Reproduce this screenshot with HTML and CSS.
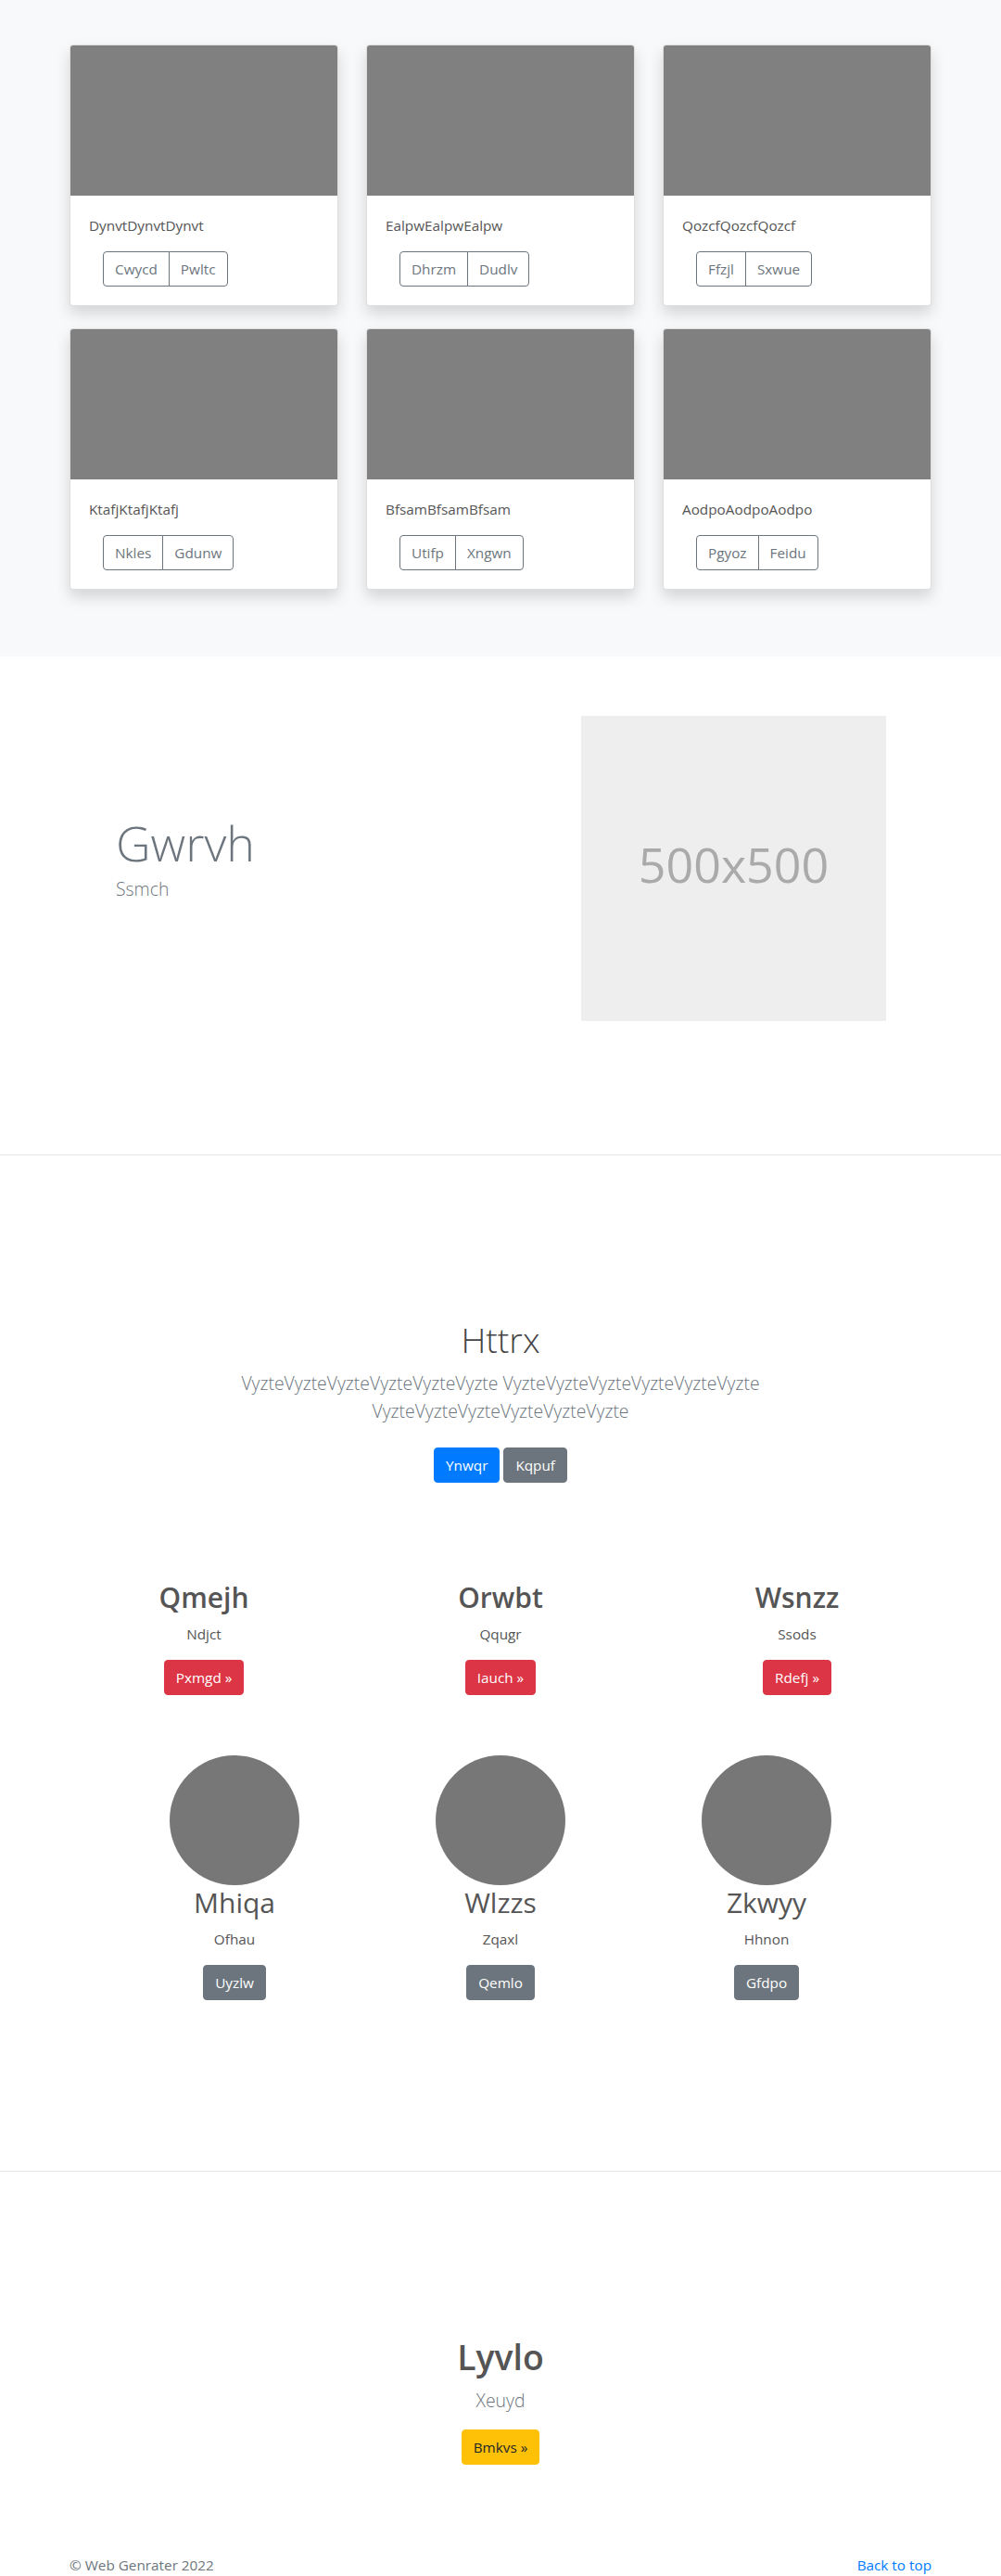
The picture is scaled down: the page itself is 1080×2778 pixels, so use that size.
FILE: index.html
```html
<!DOCTYPE html>
<html lang="en">
<head>
<meta charset="utf-8">
<title>Album</title>
<link rel="stylesheet" href="styles.css">
</head>
<body>
<main>
  <section class="album">
    <div class="album-grid">
      <div class="card">
        <div class="card-img"></div>
        <div class="card-body">
          <p class="card-text">DynvtDynvtDynvt</p>
          <div class="btn-group"><button class="btn btn-outline">Cwycd</button><button class="btn btn-outline">Pwltc</button></div>
        </div>
      </div>
      <div class="card">
        <div class="card-img"></div>
        <div class="card-body">
          <p class="card-text">EalpwEalpwEalpw</p>
          <div class="btn-group"><button class="btn btn-outline">Dhrzm</button><button class="btn btn-outline">Dudlv</button></div>
        </div>
      </div>
      <div class="card">
        <div class="card-img"></div>
        <div class="card-body">
          <p class="card-text">QozcfQozcfQozcf</p>
          <div class="btn-group"><button class="btn btn-outline">Ffzjl</button><button class="btn btn-outline">Sxwue</button></div>
        </div>
      </div>
      <div class="card">
        <div class="card-img"></div>
        <div class="card-body">
          <p class="card-text">KtafjKtafjKtafj</p>
          <div class="btn-group"><button class="btn btn-outline">Nkles</button><button class="btn btn-outline">Gdunw</button></div>
        </div>
      </div>
      <div class="card">
        <div class="card-img"></div>
        <div class="card-body">
          <p class="card-text">BfsamBfsamBfsam</p>
          <div class="btn-group"><button class="btn btn-outline">Utifp</button><button class="btn btn-outline">Xngwn</button></div>
        </div>
      </div>
      <div class="card">
        <div class="card-img"></div>
        <div class="card-body">
          <p class="card-text">AodpoAodpoAodpo</p>
          <div class="btn-group"><button class="btn btn-outline">Pgyoz</button><button class="btn btn-outline">Feidu</button></div>
        </div>
      </div>
    </div>
  </section>

  <section class="feature">
    <div class="feature-text">
      <h1 class="display">Gwrvh</h1>
      <p class="lead muted">Ssmch</p>
    </div>
    <svg class="placeholder" viewBox="0 0 329 329" role="img" aria-label="500x500">
      <rect width="100%" height="100%" fill="#eeeeee"></rect>
      <text x="50%" y="50%" dy=".3em" text-anchor="middle" fill="#aaaaaa">500x500</text>
    </svg>
  </section>

  <hr class="divider">

  <section class="jumbo">
    <h1 class="jumbo-title">Httrx</h1>
    <p class="lead muted jumbo-lead">VyzteVyzteVyzteVyzteVyzteVyzte VyzteVyzteVyzteVyzteVyzteVyzte VyzteVyzteVyzteVyzteVyzteVyzte</p>
    <div class="btn-row">
      <a class="btn btn-primary" href="#">Ynwqr</a>
      <a class="btn btn-secondary" href="#">Kqpuf</a>
    </div>

    <div class="features">
      <div class="feature-col">
        <h2 class="col-title">Qmejh</h2>
        <p class="col-text">Ndjct</p>
        <a class="btn btn-danger" href="#">Pxmgd &raquo;</a>
      </div>
      <div class="feature-col">
        <h2 class="col-title">Orwbt</h2>
        <p class="col-text">Qqugr</p>
        <a class="btn btn-danger" href="#">Iauch &raquo;</a>
      </div>
      <div class="feature-col">
        <h2 class="col-title">Wsnzz</h2>
        <p class="col-text">Ssods</p>
        <a class="btn btn-danger" href="#">Rdefj &raquo;</a>
      </div>
    </div>

    <div class="team">
      <div class="member">
        <div class="avatar"></div>
        <h2 class="member-name">Mhiqa</h2>
        <p class="col-text">Ofhau</p>
        <a class="btn btn-secondary" href="#">Uyzlw</a>
      </div>
      <div class="member">
        <div class="avatar"></div>
        <h2 class="member-name">Wlzzs</h2>
        <p class="col-text">Zqaxl</p>
        <a class="btn btn-secondary" href="#">Qemlo</a>
      </div>
      <div class="member">
        <div class="avatar"></div>
        <h2 class="member-name">Zkwyy</h2>
        <p class="col-text">Hhnon</p>
        <a class="btn btn-secondary" href="#">Gfdpo</a>
      </div>
    </div>
  </section>

  <hr class="divider">

  <section class="cta">
    <h1 class="cta-title">Lyvlo</h1>
    <p class="lead muted cta-lead">Xeuyd</p>
    <a class="btn btn-warning" href="#">Bmkvs &raquo;</a>
  </section>
</main>

<footer class="footer">
  <p class="copy">&copy; Web Genrater 2022</p>
  <a class="back" href="#">Back to top</a>
</footer>
</body>
</html>
```

FILE: styles.css
```css
* {
  box-sizing: border-box;
}

html, body {
  margin: 0;
  padding: 0;
}

body {
  font-family: "Open Sans", "Noto Sans", "Liberation Sans", sans-serif;
  font-size: 15.3px;
  line-height: 24px;
  color: #212529;
  background: #ffffff;
}

h1, h2, p {
  margin: 0;
}

/* ---------- album ---------- */
.album {
  background: #f8f9fa;
  padding: 48px 0 72px;
}

.album-grid {
  width: 930px;
  margin: 0 auto;
  display: grid;
  grid-template-columns: repeat(3, 290px);
  column-gap: 30px;
  row-gap: 24px;
}

.card {
  background: #ffffff;
  border: 1px solid rgba(0, 0, 0, 0.125);
  border-radius: 4px;
  overflow: hidden;
  box-shadow: 0 8px 16px rgba(0, 0, 0, 0.15);
}

.card-img {
  height: 162px;
  background: #808080;
}

.card-body {
  padding: 20px;
}

.card-text {
  color: #555555;
  margin-bottom: 16px;
}

.btn-group {
  display: inline-flex;
  margin-left: 15px;
}

/* ---------- buttons ---------- */
.btn {
  display: inline-block;
  font-family: inherit;
  font-size: 15.3px;
  font-weight: 400;
  line-height: 24px;
  padding: 6px 12px;
  border: 1px solid transparent;
  border-radius: 4px;
  text-decoration: none;
  text-align: center;
  cursor: pointer;
}

.btn-outline {
  background: #ffffff;
  color: #6c757d;
  border-color: #6c757d;
}

.btn-group .btn:first-child {
  border-top-right-radius: 0;
  border-bottom-right-radius: 0;
}

.btn-group .btn + .btn {
  margin-left: -1px;
  border-top-left-radius: 0;
  border-bottom-left-radius: 0;
}

.btn-primary {
  background: #007bff;
  border-color: #007bff;
  color: #ffffff;
}

.btn-secondary {
  background: #6c757d;
  border-color: #6c757d;
  color: #ffffff;
}

.btn-danger {
  background: #dc3545;
  border-color: #dc3545;
  color: #ffffff;
}

.btn-warning {
  background: #ffc107;
  border-color: #ffc107;
  color: #212529;
}

/* ---------- feature ---------- */
.feature {
  width: 930px;
  margin: 0 auto;
  padding: 64px 0 144px;
  display: flex;
  align-items: flex-start;
}

.feature-text {
  flex: 1;
  padding: 103px 0 0 50px;
}

.display {
  font-size: 52px;
  font-weight: 300;
  line-height: 67px;
  color: #6c757d;
  margin-bottom: 2px;
}

.lead {
  font-size: 19.4px;
  font-weight: 300;
  line-height: 30px;
}

.muted {
  color: #6c757d;
}

.placeholder {
  display: block;
  flex: none;
  width: 329px;
  height: 329px;
  margin-right: 49px;
}

.placeholder text {
  font-family: "Open Sans", "Noto Sans", sans-serif;
  font-size: 52px;
  font-weight: 400;
}

.divider {
  border: 0;
  border-top: 1px solid #e6e6e6;
  margin: 0;
  height: 0;
}

/* ---------- jumbo ---------- */
.jumbo {
  padding: 175px 0 184px;
  text-align: center;
}

.jumbo-title {
  font-size: 37.4px;
  font-weight: 300;
  line-height: 48px;
  color: #444444;
  margin-bottom: 8px;
}

.jumbo-lead {
  width: 610px;
  margin: 0 auto 24px;
}

.btn-row {
  display: flex;
  justify-content: center;
  gap: 4px;
}

.features {
  width: 960px;
  margin: 105px auto 0;
  display: grid;
  grid-template-columns: repeat(3, 1fr);
}

.col-title {
  font-size: 30px;
  font-weight: 600;
  line-height: 38px;
  color: #555555;
  margin-bottom: 8px;
}

.col-text {
  color: #555555;
  margin-bottom: 16px;
}

.team {
  width: 861px;
  margin: 65px auto 0;
  display: grid;
  grid-template-columns: repeat(3, 1fr);
}

.avatar {
  width: 140px;
  height: 140px;
  border-radius: 50%;
  background: #777777;
  margin: 0 auto;
}

.member-name {
  font-size: 30px;
  font-weight: 400;
  line-height: 38px;
  color: #555555;
  margin-bottom: 8px;
}

/* ---------- cta ---------- */
.cta {
  padding-top: 176px;
  text-align: center;
}

.cta-title {
  font-size: 37.4px;
  font-weight: 600;
  line-height: 48px;
  color: #555555;
  margin-bottom: 8px;
}

.cta-lead {
  margin-bottom: 16px;
}

/* ---------- footer ---------- */
.footer {
  width: 930px;
  margin: 0 auto;
  padding-top: 96px;
  display: flex;
  justify-content: space-between;
  color: #6c757d;
}

.back {
  color: #007bff;
  text-decoration: none;
}
```
